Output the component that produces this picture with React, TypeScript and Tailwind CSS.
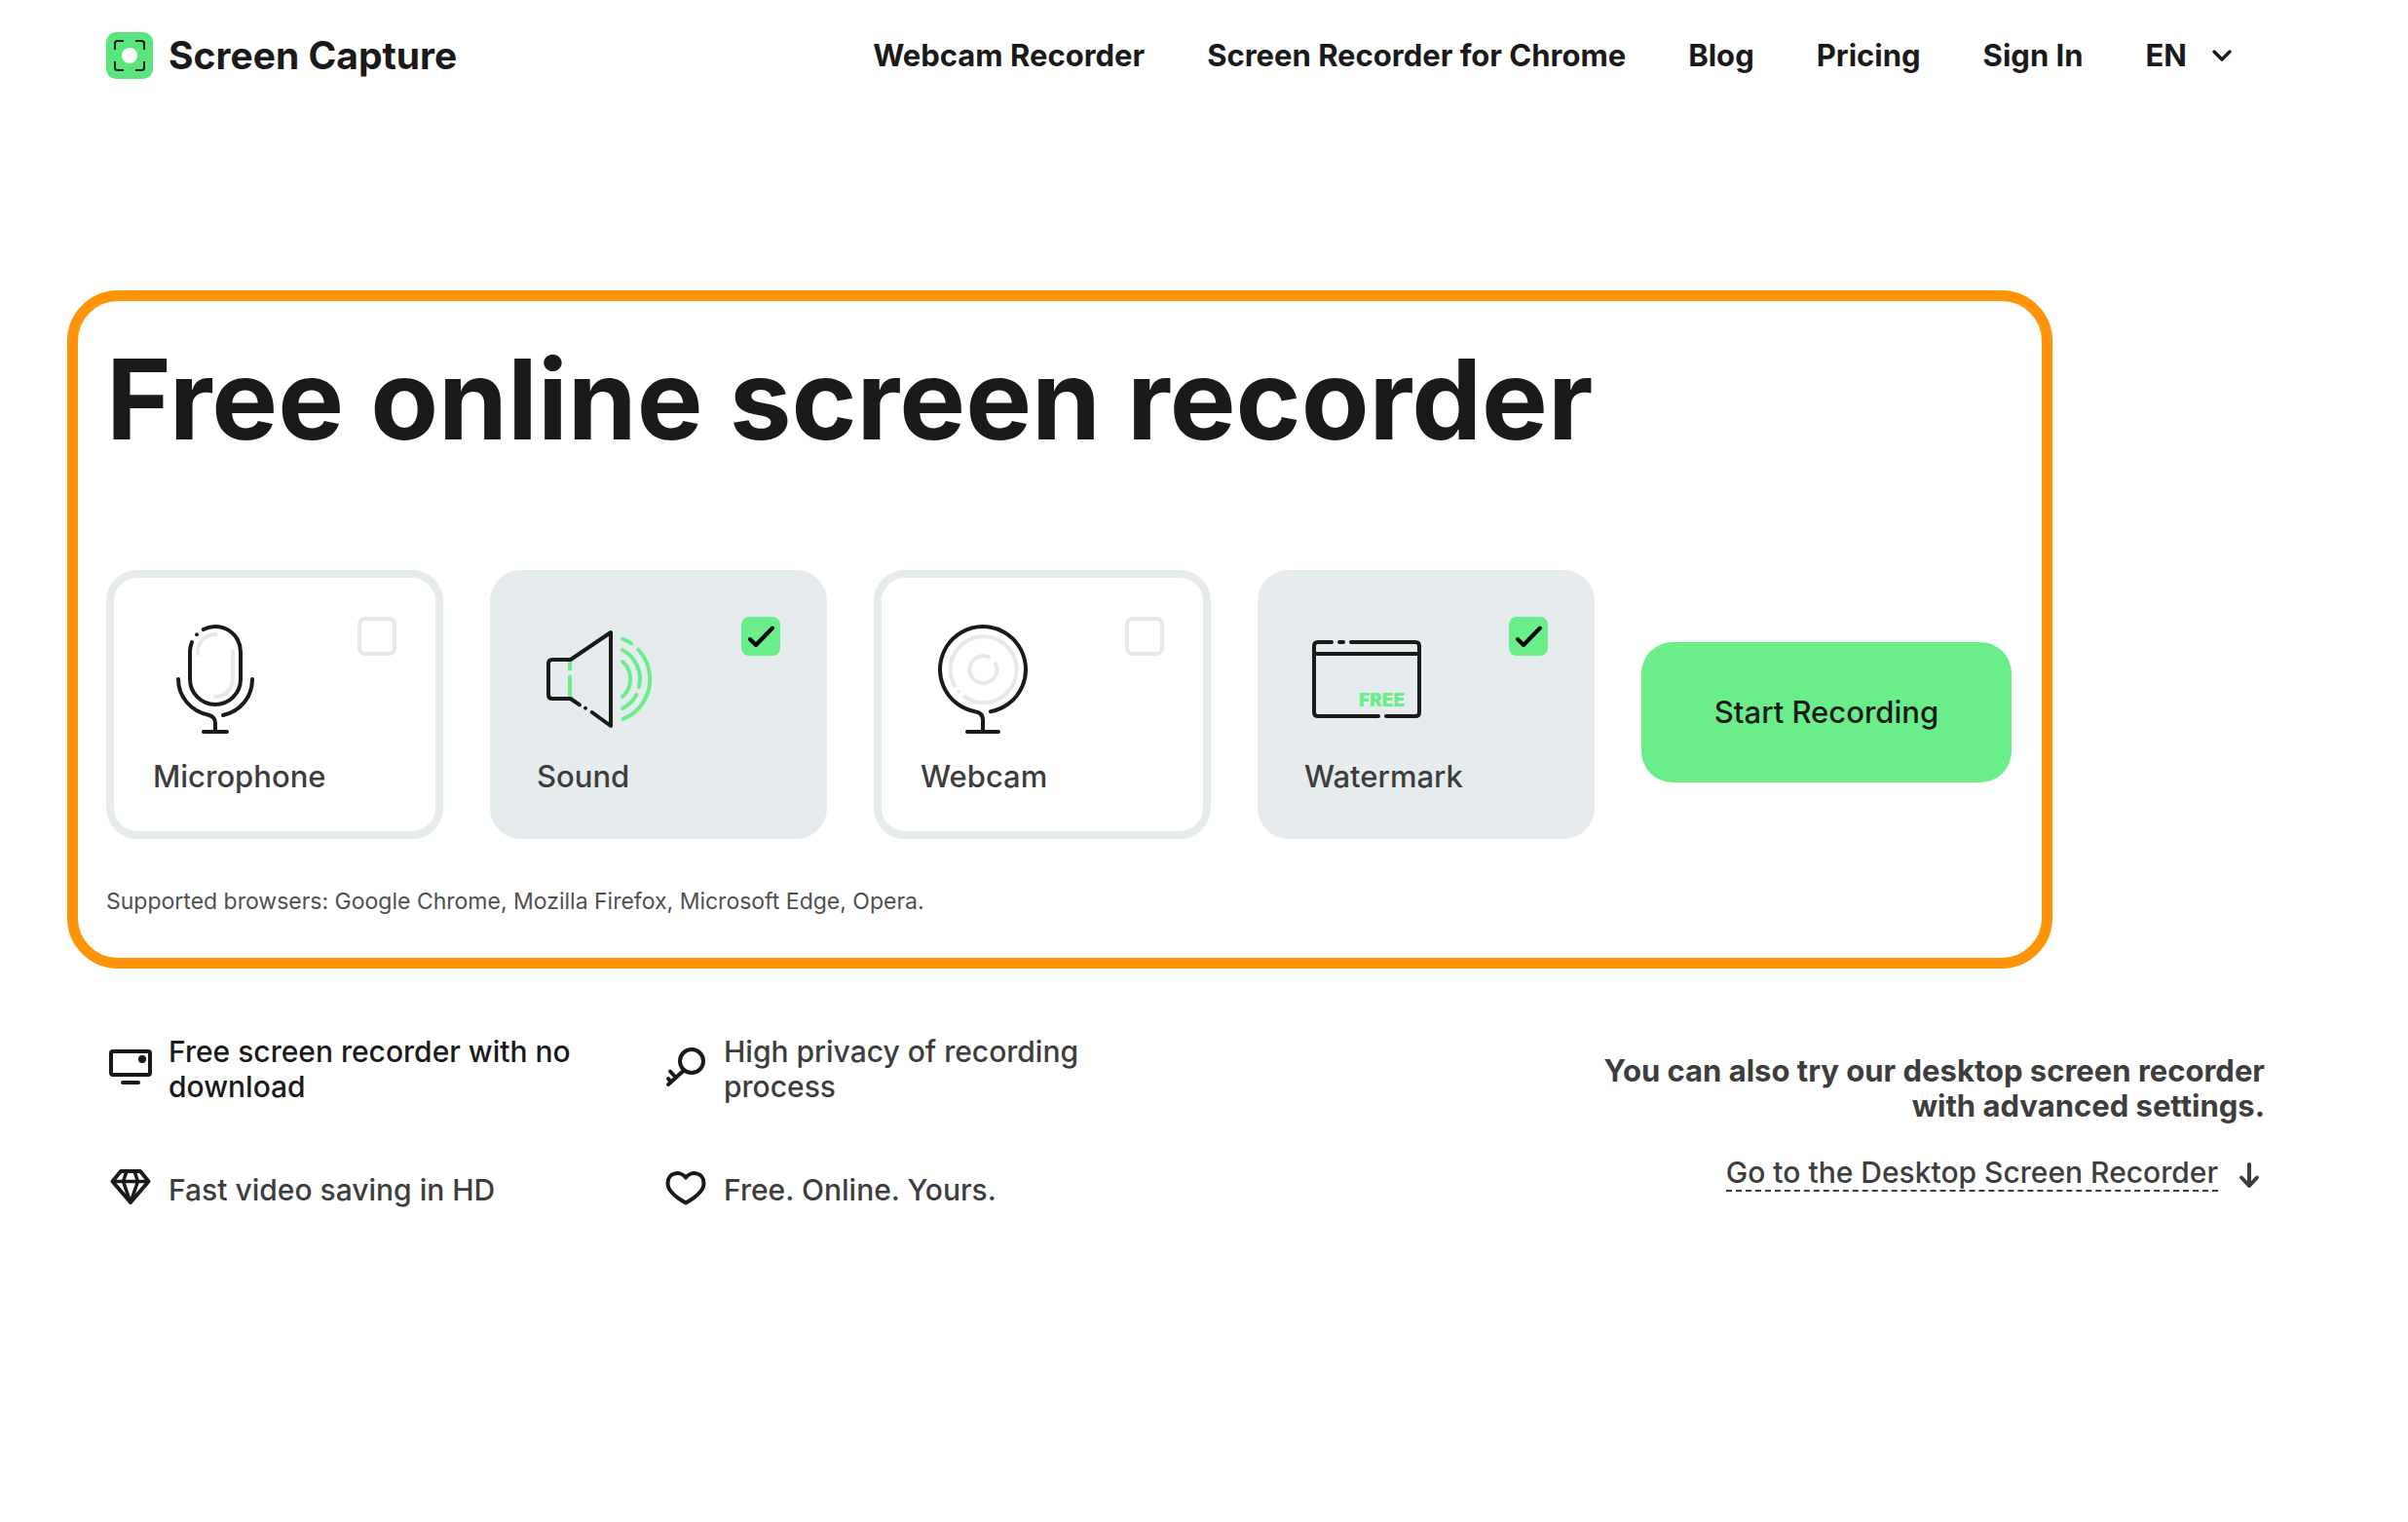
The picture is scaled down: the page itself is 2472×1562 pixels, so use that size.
import { useState, type ReactNode } from "react";
import { ChevronDown } from "lucide-react";

const navLinks = ["Webcam Recorder", "Screen Recorder for Chrome", "Blog", "Pricing", "Sign In"];

function Logo() {
  return (
    <svg className="size-12 shrink-0" viewBox="0 0 48 48" fill="none" aria-hidden="true">
      <rect width="48" height="48" rx="10" fill="#59e67f" />
      <path
        d="M9 18v-6.500Q9 9 11.500 9H18M30 9h6.500Q39 9 39 11.500V18M39 30v6.500Q39 39 36.500 39H30M18 39h-6.500Q9 39 9 36.500V30"
        stroke="#1a1a1a"
        strokeWidth="2"
      />
      <circle cx="24" cy="24" r="8" fill="#fff" />
    </svg>
  );
}

function MicrophoneIcon() {
  return (
    <>
      <g stroke="#e6e9eb">
        <path d="M64.500 18A18 18 0 0 0 46 38" />
        <path d="M82 35.500V64A18 18 0 0 1 64 82" />
      </g>
      <path d="M51.700 13A26 26 0 0 1 90 36V64A26 26 0 0 1 38 64V36Q38 31 40 26" />
      <path d="M45 18.300h0.010" />
      <path d="M26 64C26 82 39 97 57 100.700Q64 102.500 64 109V118" />
      <path d="M102 64C102 82 90 97 72 101" />
      <path d="M52 118H76" />
    </>
  );
}

function SoundIcon() {
  return (
    <>
      <g stroke="#69ee89">
        <path d="M34 47V53.500M34 61.500V82" />
        <path d="M88 46A24 24 0 0 1 88 82" />
        <path d="M88 34A34 34 0 0 1 105 72M102.300 80A34 34 0 0 1 88 94" />
        <path d="M88 22.700Q93 24.600 97.300 27.500M104 33.700A44 44 0 0 1 88.500 105" />
      </g>
      <path d="M44 90.300L34.700 84H16Q12 84 12 80V48Q12 44 16 44H34.700L76 16V112L56.700 98" />
      <path d="M50 93.700h0.010" />
    </>
  );
}

function WebcamIcon() {
  return (
    <>
      <g stroke="#e6e9eb">
        <path d="M45 82A34 34 0 1 0 35 71" />
        <path d="M39 76.700h0.010" />
        <path d="M70 41.300A14 14 0 1 0 77 48" />
      </g>
      <path d="M72 97.300A44 44 0 1 0 56 97.300Q64 98.500 64 106V118" />
      <path d="M48 118H80" />
    </>
  );
}

function WatermarkIcon() {
  return (
    <>
      <path d="M28 26H14Q10 26 10 30V98Q10 102 14 102H76M84 102H114Q118 102 118 98V30Q118 26 114 26H48" />
      <path d="M36 26H40M11 38H117" />
      <text x="56" y="92" fill="#69ee89" stroke="none" fontSize="19" fontWeight="900">
        FREE
      </text>
    </>
  );
}

const options: { name: string; checked: boolean; icon: ReactNode }[] = [
  { name: "Microphone", checked: false, icon: <MicrophoneIcon /> },
  { name: "Sound", checked: true, icon: <SoundIcon /> },
  { name: "Webcam", checked: false, icon: <WebcamIcon /> },
  { name: "Watermark", checked: true, icon: <WatermarkIcon /> },
];

function OptionCard({ name, checked, icon }: { name: string; checked: boolean; icon: ReactNode }) {
  const [on, setOn] = useState(checked);

  return (
    <label className="flex h-[276px] w-[346px] cursor-pointer flex-col rounded-[32px] border-8 border-[#e6ecee] p-10 has-checked:bg-[#e6ecee]">
      <span className="flex items-start justify-between">
        <svg
          className="size-32"
          viewBox="0 0 128 128"
          fill="none"
          stroke="#1a1a1a"
          strokeWidth="4"
          strokeLinecap="round"
          strokeLinejoin="round"
          aria-hidden="true"
        >
          {icon}
        </svg>
        <span className="grid size-10">
          <input
            type="checkbox"
            checked={on}
            onChange={(e) => setOn(e.target.checked)}
            className="peer col-start-1 row-start-1 size-10 cursor-pointer appearance-none rounded-lg border-4 border-[#e6e9eb] checked:border-[#69ee89] checked:bg-[#69ee89]"
          />
          <svg
            className="pointer-events-none invisible col-start-1 row-start-1 size-10 peer-checked:visible"
            viewBox="0 0 40 40"
            fill="none"
            stroke="#000"
            strokeWidth="4"
            strokeLinecap="round"
            strokeLinejoin="round"
            aria-hidden="true"
          >
            <path d="M9 23L15 29L32 11.500" />
          </svg>
        </span>
      </span>
      <span className="mt-4 text-[31px] leading-10 font-medium text-[#3d3d3d]">{name}</span>
    </label>
  );
}

const features: { text: string; dark?: boolean; icon: ReactNode }[] = [
  {
    text: "Free screen recorder with no download",
    dark: true,
    icon: (
      <>
        <rect x="5" y="6" width="40" height="24" rx="2" />
        <path d="M17 38H33" />
        <circle cx="37" cy="14" r="4" fill="#1a1a1a" stroke="none" />
      </>
    ),
  },
  {
    text: "High privacy of recording process",
    icon: (
      <>
        <circle cx="31" cy="16" r="12" />
        <path d="M22.500 26L7 40M14 32L9 26.500M9.500 37L7 34" />
      </>
    ),
  },
  {
    text: "Fast video saving in HD",
    icon: (
      <>
        <path d="M15 5H35L43.500 15.500L25 37L6.500 15.500Z" />
        <path d="M6.500 15.500H43.500M21 5L17.500 15.500L25 37L32.500 15.500L29 5" strokeWidth="3.500" />
      </>
    ),
  },
  {
    text: "Free. Online. Yours.",
    icon: <path d="M25 11.500C20 4.500 6.500 5.500 6.500 17.500C6.500 26 17 33 25 37.500C33 33 43.500 26 43.500 17.500C43.500 5.500 30 4.500 25 11.500Z" />,
  },
];

export default function App() {
  return (
    <div className="min-h-screen bg-white pb-20 font-[Inter,sans-serif] text-[#1a1a1a]">
      <header className="flex items-center justify-between pt-8 pr-[175px] pl-[109px]">
        <a href="#" className="flex items-center gap-4 text-[39px] leading-[50px] font-bold">
          <Logo />
          Screen Capture
        </a>
        <nav className="flex items-center gap-16 text-[31px] leading-[50px] font-bold">
          {navLinks.map((link) => (
            <a key={link} href="#">
              {link}
            </a>
          ))}
          <button type="button" className="flex items-center gap-5">
            EN
            <ChevronDown className="size-8" strokeWidth={2.500} aria-hidden="true" />
          </button>
        </nav>
      </header>

      <main>
        <section className="mt-[216px] ml-[69px] w-fit rounded-[52px] border-[11px] border-[#ff9408] pt-[33px] pr-[31px] pb-[42px] pl-[29px]">
          <h1 className="text-[114px] leading-[136px] font-bold">Free online screen recorder</h1>
          <form className="mt-[107px] flex items-center gap-12" onSubmit={(e) => e.preventDefault()}>
            {options.map((option) => (
              <OptionCard key={option.name} {...option} />
            ))}
            <button
              type="submit"
              className="mt-4 h-36 w-[380px] cursor-pointer rounded-[32px] bg-[#69ee89] text-[31px] font-medium"
            >
              Start Recording
            </button>
          </form>
          <p className="mt-12 text-[23px] leading-8 text-[#505050]">
            Supported browsers: Google Chrome, Mozilla Firefox, Microsoft Edge, Opera.
          </p>
        </section>

        <section className="mt-[67px] flex justify-between pr-[147px] pl-[109px]">
          <ul className="grid grid-cols-[506px_506px] content-start gap-16 text-[30px] leading-9 font-medium">
            {features.map(({ text, dark, icon }) => (
              <li key={text} className="flex items-center gap-4">
                <svg
                  className="size-12 shrink-0"
                  viewBox="0 0 48 48"
                  fill="none"
                  stroke="#1a1a1a"
                  strokeWidth="4"
                  strokeLinecap="round"
                  strokeLinejoin="round"
                  aria-hidden="true"
                >
                  {icon}
                </svg>
                <span className={dark ? "max-w-[430px]" : "max-w-[430px] text-[#3d3d3d]"}>{text}</span>
              </li>
            ))}
          </ul>
          <div className="mt-5 text-right leading-9 text-[#3d3d3d]">
            <p className="text-[31px] font-bold">
              You can also try our desktop screen recorder
              <br />
              with advanced settings.
            </p>
            <a href="#" className="mt-8 inline-flex items-center gap-4 text-[30px] font-medium">
              <span className="border-b-2 border-dashed border-[#3d3d3d]">Go to the Desktop Screen Recorder</span>
              <svg
                className="size-8"
                viewBox="0 0 32 32"
                fill="none"
                stroke="#3d3d3d"
                strokeWidth="4"
                strokeLinecap="round"
                strokeLinejoin="round"
                aria-hidden="true"
              >
                <path d="M16 7V29M8 20.500L16 29L24 20.500" />
              </svg>
            </a>
          </div>
        </section>
      </main>
    </div>
  );
}
